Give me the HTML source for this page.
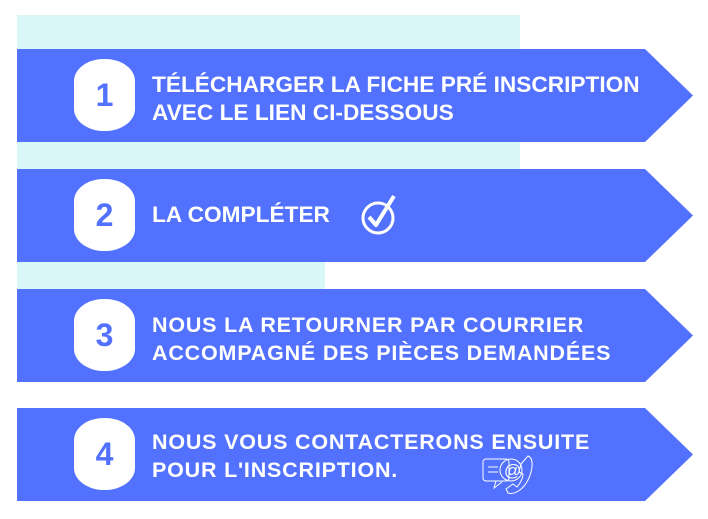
<!DOCTYPE html>
<html><head><meta charset="utf-8"><style>
*{margin:0;padding:0;box-sizing:border-box}
body{width:708px;height:519px;background:#fff;position:relative;overflow:hidden;font-family:"Liberation Sans",Arial,sans-serif}
.cy{position:absolute;background:#d9f7f7}
.ar{position:absolute;left:17px;width:676px;height:93px}
.ar svg{position:absolute;left:0;top:0}
.b{position:absolute;left:57px;top:10px;width:61px;height:72px;background:#fff;border-radius:30px/22px;color:#5271ff;font-weight:bold;font-size:32px;text-align:center;line-height:72px}
.t{position:absolute;left:135px;color:#fff;font-weight:bold;font-size:21.5px;letter-spacing:0.8px;line-height:28px;white-space:nowrap}
.c{font-size:22px;letter-spacing:0;transform:scaleX(1.03);transform-origin:left}
</style></head><body>
<div class="cy" style="left:17px;top:15px;width:503px;height:160px"></div>
<div class="cy" style="left:17px;top:255px;width:308px;height:36px"></div>

<div class="ar" style="top:49px"><svg width="676" height="93"><polygon points="0,0 628,0 676,46.5 628,93 0,93" fill="#5271ff"/></svg>
<div class="b">1</div>
<div class="t c" style="top:22px">TÉLÉCHARGER LA FICHE PRÉ INSCRIPTION<br>AVEC LE LIEN CI-DESSOUS</div></div>

<div class="ar" style="top:169px"><svg width="676" height="93"><polygon points="0,0 628,0 676,46.5 628,93 0,93" fill="#5271ff"/></svg>
<div class="b">2</div>
<div class="t c" style="top:32px">LA COMPLÉTER</div>
<svg style="position:absolute;left:343px;top:23px" width="42" height="44" viewBox="0 0 42 44"><circle cx="18" cy="26" r="15" fill="none" stroke="#fff" stroke-width="3"/><path d="M9 25 L16 33 L34 4" fill="none" stroke="#fff" stroke-width="4" stroke-linejoin="round"/></svg></div>

<div class="ar" style="top:289px"><svg width="676" height="93"><polygon points="0,0 628,0 676,46.5 628,93 0,93" fill="#5271ff"/></svg>
<div class="b">3</div>
<div class="t" style="top:22px">NOUS LA RETOURNER PAR COURRIER<br>ACCOMPAGNÉ DES PIÈCES DEMANDÉES</div></div>

<div class="ar" style="top:408px"><svg width="676" height="93"><polygon points="0,0 628,0 676,46.5 628,93 0,93" fill="#5271ff"/></svg>
<div class="b">4</div>
<div class="t" style="top:20px">NOUS VOUS CONTACTERONS ENSUITE<br>POUR L'INSCRIPTION.</div>
<svg style="position:absolute;left:463px;top:46px" width="60" height="42" viewBox="0 0 60 42" fill="none" stroke="#fff" stroke-width="1"><rect x="3" y="5" width="26" height="22" rx="3"/><path d="M8 13h10M8 18h10M16 27l-2 7 8-6"/><circle cx="31" cy="16" r="11"/><text x="24" y="22" fill="#fff" stroke="none" font-size="17" font-family="Liberation Sans">@</text><path d="M48 2c6 2 5 14 0 24s-14 15-20 13l-2-4 7-5 4 3c3-3 6-9 6-13l-4-2 2-8z"/></svg></div>
</body></html>
